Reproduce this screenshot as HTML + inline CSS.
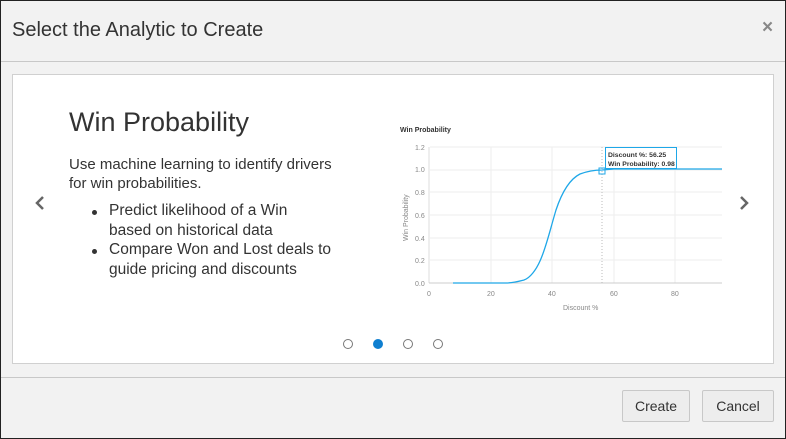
<!DOCTYPE html>
<html><head><style>
*{margin:0;padding:0;box-sizing:border-box}
html{background:#f2f2f2}
body{width:786px;height:439px;background:#f2f2f2;font-family:"Liberation Sans",sans-serif;overflow:hidden}
.frame{position:absolute;left:0;top:0;width:786px;height:439px;border:1px solid #222;z-index:5}
.a{position:absolute}
.hdr{left:12px;top:19px;font-size:20px;color:#333}
.x{left:762px;top:17px;font-size:19px;color:#888;font-weight:bold}
.sep{left:0;width:786px;height:1px;background:#c8c8c8}
.box{left:12px;top:74px;width:762px;height:290px;background:#fff;border:1px solid #d0d0d0}
.t{left:69px;top:107px;font-size:27px;color:#333}
.p{left:69px;top:155px;font-size:15px;line-height:19px;color:#333;width:275px}
.b{font-size:15.5px;line-height:19.5px;color:#333;left:109px}
.btn{top:390px;height:32px;border:1px solid #c8c8c8;background:#ededed;border-radius:2px;font-size:14px;color:#333;text-align:center;line-height:30px}
.c{width:10px;height:10px;border-radius:50%;border:1px solid #777;top:339px}
</style></head><body>
<div class="frame"></div>
<div class="a hdr">Select the Analytic to Create</div>
<div class="a x">×</div>
<div class="a sep" style="top:61px"></div>
<div class="a box"></div>
<svg class="a" style="left:33px;top:194px" width="14" height="18"><path d="M10 3 L4 9 L10 15" stroke="#666" stroke-width="2.5" fill="none"/></svg>
<svg class="a" style="left:737px;top:194px" width="14" height="18"><path d="M4 3 L10 9 L4 15" stroke="#666" stroke-width="2.5" fill="none"/></svg>
<div class="a t">Win Probability</div>
<div class="a p">Use machine learning to identify drivers for win probabilities.</div>
<div class="a b" style="top:201px">Predict likelihood of a Win<br>based on historical data<br>Compare Won and Lost deals to<br>guide pricing and discounts</div>
<div class="a" style="left:92px;top:210px;width:5px;height:5px;border-radius:50%;background:#333"></div>
<div class="a" style="left:92px;top:249px;width:5px;height:5px;border-radius:50%;background:#333"></div>
<svg class="a" style="left:390px;top:120px" width="340" height="200" font-family="Liberation Sans" font-size="7" fill="#888">
<text x="10" y="12" font-size="7" font-weight="bold" fill="#333">Win Probability</text>
<g stroke="#eee" stroke-width="1">
<line x1="40" y1="27" x2="332" y2="27"/><line x1="40" y1="50" x2="332" y2="50"/><line x1="40" y1="72" x2="332" y2="72"/><line x1="40" y1="95" x2="332" y2="95"/><line x1="40" y1="118" x2="332" y2="118"/><line x1="40" y1="140" x2="332" y2="140"/>
<line x1="101" y1="27" x2="101" y2="163"/><line x1="162" y1="27" x2="162" y2="163"/><line x1="224" y1="27" x2="224" y2="163"/><line x1="285" y1="27" x2="285" y2="163"/>
</g>
<line x1="39" y1="27" x2="39" y2="163" stroke="#ddd"/>
<line x1="39" y1="163" x2="332" y2="163" stroke="#ccc"/>
<line x1="212" y1="27" x2="212" y2="163" stroke="#bbb" stroke-dasharray="1,2"/>
<text x="25" y="30">1.2</text><text x="25" y="52">1.0</text><text x="25" y="75">0.8</text><text x="25" y="98">0.6</text><text x="25" y="121">0.4</text><text x="25" y="143">0.2</text><text x="25" y="166">0.0</text>
<text x="37" y="176">0</text><text x="97" y="176">20</text><text x="158" y="176">40</text><text x="220" y="176">60</text><text x="281" y="176">80</text>
<text x="173" y="190">Discount %</text>
<text transform="translate(18,121) rotate(-90)">Win Probability</text>
<path d="M63 163 L116 163 C124 163 130 161 134 160 C140 158 146 150 150 141 C156 128 160 110 166 90 C172 72 180 59 190 54 C198 51 204 50 212 50 L224 49 L332 49" stroke="#1ea7e8" stroke-width="1.3" fill="none"/>
<rect x="209" y="48" width="6" height="6" fill="none" stroke="#1ea7e8"/>
<rect x="215.5" y="27.5" width="71" height="21" fill="#fff" stroke="#1ea7e8"/>
<text x="218" y="37" font-size="6.8" font-weight="bold" fill="#333">Discount %: 56.25</text>
<text x="218" y="46" font-size="6.8" font-weight="bold" fill="#333">Win Probability: 0.98</text>
</svg>
<div class="a c" style="left:343px"></div>
<div class="a c" style="left:373px;background:#0f7fd0;border-color:#0f7fd0"></div>
<div class="a c" style="left:403px"></div>
<div class="a c" style="left:433px"></div>
<div class="a sep" style="top:377px"></div>
<div class="a btn" style="left:622px;width:68px">Create</div>
<div class="a btn" style="left:702px;width:72px">Cancel</div>
</body></html>
